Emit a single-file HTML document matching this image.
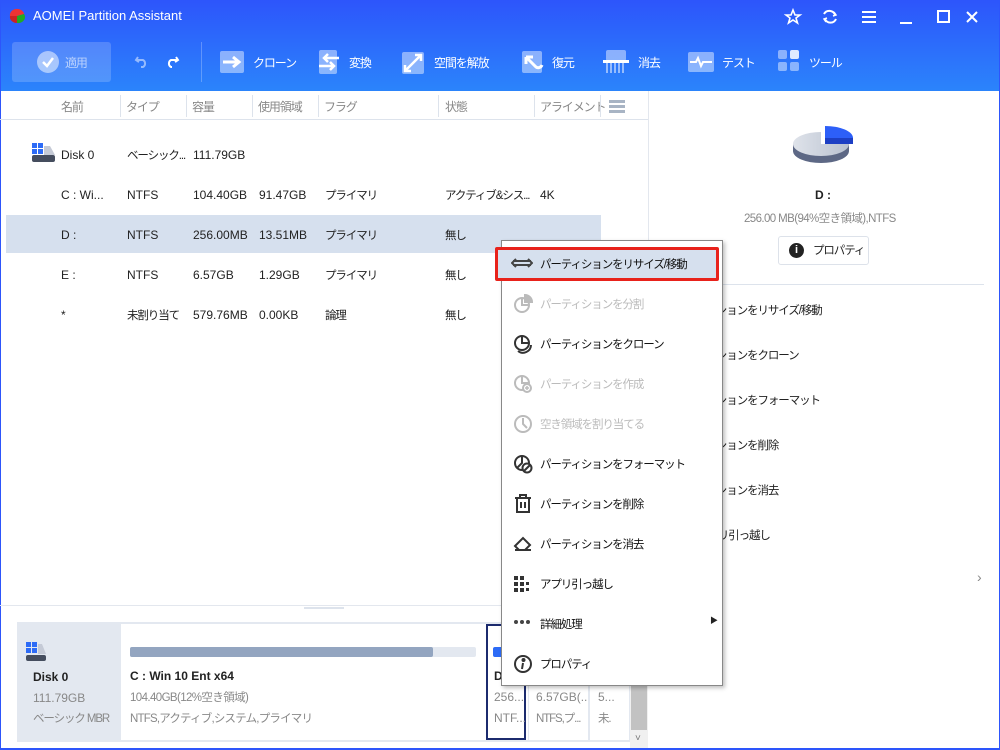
<!DOCTYPE html>
<html><head><meta charset="utf-8"><style>
*{margin:0;padding:0;box-sizing:border-box}
body{width:1000px;height:750px;overflow:hidden;position:relative;background:#fff;font-family:"Liberation Sans","Noto Sans CJK JP",sans-serif;font-size:12px;color:#222}
.a{position:absolute;white-space:nowrap}
.j{font-size:11.5px;letter-spacing:-1.1px}
#hdr{position:absolute;left:0;top:0;width:1000px;height:91px;background:linear-gradient(#2d55fb,#2b84fb)}
.tb{color:#fff;font-size:12px}
.ic{position:absolute;background:rgba(255,255,255,.45);border-radius:2px}
.hd{color:#888;font-size:12px}
.sep{position:absolute;top:95px;width:1px;height:22px;background:#dde3ec}
.menu{position:absolute;left:501px;top:240px;width:222px;height:446px;background:#fff;border:1px solid #888;box-shadow:2px 2px 4px rgba(0,0,0,.25)}
.mi{position:absolute;left:38px;font-size:11.5px;letter-spacing:-1.1px;color:#111}
.dis{color:#bbb}
.rp{position:absolute;left:675px;font-size:11.5px;letter-spacing:-1.1px;color:#222}
</style></head><body>
<div id="hdr"></div>
<div class="a" style="left:0;top:0;width:1px;height:750px;background:#2d55fb"></div>
<div class="a" style="left:999px;top:0;width:1px;height:750px;background:#2d55fb"></div>
<div class="a" style="left:0;top:748px;width:1000px;height:2px;background:#2d55fb"></div>
<svg class="a" style="left:8px;top:8px" width="18" height="16"><path d="M2 8 A7 6 0 0 1 16 6 L9 8Z" fill="#e33"/><path d="M2 8 L9 8 L9 15 A7 6 0 0 1 2 8Z" fill="#c22"/><path d="M9 8 L16 6 A7 6 0 0 1 9 15Z" fill="#2a2"/></svg>
<div class="a tb" style="left:33px;top:8px;font-size:13px">AOMEI Partition Assistant</div>
<svg class="a" style="left:784px;top:8px" width="200" height="18" fill="none" stroke="#fff" stroke-width="2">
<path d="M9 2 L11 7 L16 7 L12 10 L13.5 15 L9 12 L4.5 15 L6 10 L2 7 L7 7Z" stroke-width="1.6"/>
<path d="M40 6 A6 6 0 0 1 51 7 M52 11 A6 6 0 0 1 41 11" /><path d="M50 4 L52 7 L49 8 M42 14 L40 11 L43 10" stroke-width="1.5"/>
<path d="M78 4 H92 M78 9 H92 M78 14 H92"/>
<path d="M116 15 H128"/>
<rect x="154" y="3" width="11" height="11"/>
<path d="M190 3 L200 13 M200 3 L190 13" transform="translate(-7,1)"/>
</svg>
<div class="a" style="left:12px;top:42px;width:99px;height:40px;background:rgba(255,255,255,.18);border-radius:3px"></div>
<div class="a" style="left:37px;top:51px;width:22px;height:22px;border-radius:50%;background:rgba(255,255,255,.5)"></div>
<svg class="a" style="left:37px;top:51px" width="22" height="22"><path d="M6 11 L10 15 L16 7" stroke="#fff" stroke-width="2.5" fill="none"/></svg>
<div class="a tb j" style="left:65px;top:54px;opacity:.6">適用</div>
<svg class="a" style="left:134px;top:52px" width="46" height="18" fill="none" stroke-width="2"><path d="M4 5 L2 8 L5 10 M2 8 H9 A4 4 0 0 1 9 15 H7" stroke="rgba(255,255,255,.5)"/><path d="M42 5 L44 8 L41 10 M44 8 H37 A4 4 0 0 0 37 15 H38" stroke="#fff"/></svg>
<div class="a" style="left:201px;top:42px;width:1px;height:40px;background:rgba(255,255,255,.25)"></div>
<div class="ic" style="left:220px;top:51px;width:24px;height:22px"></div>
<svg class="a" style="left:220px;top:51px" width="24" height="22"><path d="M3 11 H17 M13 6 L19 11 L13 16" stroke="#fff" stroke-width="3" fill="none"/></svg>
<div class="a tb j" style="left:253px;top:54px">クローン</div>
<div class="ic" style="left:319px;top:50px;width:18px;height:24px"></div>
<svg class="a" style="left:317px;top:50px" width="24" height="24"><path d="M22 8 H8 M11 4 L7 8 L11 12 M2 16 H16 M13 12 L17 16 L13 20" stroke="#fff" stroke-width="2.5" fill="none"/></svg>
<div class="a tb j" style="left:349px;top:54px">変換</div>
<div class="ic" style="left:402px;top:52px;width:22px;height:22px"></div>
<svg class="a" style="left:402px;top:52px" width="22" height="22"><path d="M3 19 L19 3 M3 13 V19 H9 M13 3 H19 V9" stroke="#fff" stroke-width="2.5" fill="none"/></svg>
<div class="a tb j" style="left:434px;top:54px">空間を解放</div>
<div class="ic" style="left:522px;top:51px;width:20px;height:22px"></div>
<svg class="a" style="left:522px;top:51px" width="24" height="24"><path d="M4 6 L14 16 A4 4 0 0 0 20 14 M4 6 V13 M4 6 H11" stroke="#fff" stroke-width="3" fill="none"/></svg>
<div class="a tb j" style="left:552px;top:54px">復元</div>
<div class="ic" style="left:606px;top:50px;width:20px;height:11px"></div>
<div class="a" style="left:603px;top:60px;width:26px;height:3px;background:#fff"></div>
<div class="a" style="left:606px;top:63px;width:20px;height:10px;background:repeating-linear-gradient(90deg,rgba(255,255,255,.5) 0 2px,transparent 2px 4px)"></div>
<div class="a tb j" style="left:638px;top:54px">消去</div>
<div class="ic" style="left:688px;top:52px;width:26px;height:20px"></div>
<svg class="a" style="left:688px;top:52px" width="26" height="20"><path d="M2 10 H8 L10 6 L13 14 L15 10 H24" stroke="#fff" stroke-width="2" fill="none"/></svg>
<div class="a tb j" style="left:722px;top:54px">テスト</div>
<div class="ic" style="left:778px;top:50px;width:9px;height:9px"></div>
<div class="a" style="left:790px;top:50px;width:9px;height:9px;background:#fff;border-radius:2px;opacity:.85"></div>
<div class="ic" style="left:778px;top:62px;width:9px;height:9px"></div>
<div class="ic" style="left:790px;top:62px;width:9px;height:9px"></div>
<div class="a tb j" style="left:809px;top:54px">ツール</div>
<div class="a hd j" style="left:61px;top:98px">名前</div>
<div class="sep" style="left:120px"></div><div class="a hd j" style="left:126px;top:98px">タイプ</div>
<div class="sep" style="left:186px"></div><div class="a hd j" style="left:192px;top:98px">容量</div>
<div class="sep" style="left:252px"></div><div class="a hd j" style="left:258px;top:98px">使用領域</div>
<div class="sep" style="left:318px"></div><div class="a hd j" style="left:324px;top:98px">フラグ</div>
<div class="sep" style="left:438px"></div><div class="a hd j" style="left:445px;top:98px">状態</div>
<div class="sep" style="left:534px"></div><div class="a hd j" style="left:540px;top:98px">アライメント</div>
<div class="sep" style="left:600px"></div>
<div class="a" style="left:609px;top:100px;width:16px;height:13px;background:repeating-linear-gradient(#a8b4c4 0 3px,transparent 3px 5px)"></div>
<div class="a" style="left:0;top:119px;width:648px;height:1px;background:#dde3ec"></div>
<div class="a" style="left:648px;top:91px;width:1px;height:514px;background:#e3e7ee"></div>
<div class="a" style="left:6px;top:215px;width:595px;height:38px;background:#d6e0ee"></div>
<svg class="a" style="left:31px;top:143px" width="26" height="20"><rect x="1" y="0" width="5" height="5" fill="#2d6bf6"/><rect x="7" y="0" width="5" height="5" fill="#2d6bf6"/><rect x="1" y="6" width="5" height="5" fill="#2d6bf6"/><rect x="7" y="6" width="5" height="5" fill="#2d6bf6"/><path d="M13 3 H19 L24 12 H13Z" fill="#c5cad6"/><rect x="1" y="12" width="23" height="7" rx="2" fill="#454d5e"/></svg>
<div class="a" style="left:61px;top:148px">Disk 0</div><div class="a j" style="left:127px;top:147px">ベーシック...</div><div class="a" style="left:193px;top:148px">111.79GB</div>
<div class="a" style="left:61px;top:188px">C : Wi...</div><div class="a" style="left:127px;top:188px">NTFS</div><div class="a" style="left:193px;top:188px">104.40GB</div><div class="a" style="left:259px;top:188px">91.47GB</div><div class="a j" style="left:325px;top:187px">プライマリ</div><div class="a j" style="left:445px;top:187px">アクティブ&amp;シス...</div><div class="a" style="left:540px;top:188px">4K</div>
<div class="a" style="left:61px;top:228px">D :</div><div class="a" style="left:127px;top:228px">NTFS</div><div class="a" style="left:193px;top:228px">256.00MB</div><div class="a" style="left:259px;top:228px">13.51MB</div><div class="a j" style="left:325px;top:227px">プライマリ</div><div class="a j" style="left:445px;top:227px">無し</div>
<div class="a" style="left:61px;top:268px">E :</div><div class="a" style="left:127px;top:268px">NTFS</div><div class="a" style="left:193px;top:268px">6.57GB</div><div class="a" style="left:259px;top:268px">1.29GB</div><div class="a j" style="left:325px;top:267px">プライマリ</div><div class="a j" style="left:445px;top:267px">無し</div>
<div class="a" style="left:61px;top:308px">*</div><div class="a j" style="left:127px;top:307px">未割り当て</div><div class="a" style="left:193px;top:308px">579.76MB</div><div class="a" style="left:259px;top:308px">0.00KB</div><div class="a j" style="left:325px;top:307px">論理</div><div class="a j" style="left:445px;top:307px">無し</div>
<svg class="a" style="left:790px;top:124px" width="66" height="50"><defs><linearGradient id="g" x1="0" x2="1"><stop offset="0" stop-color="#dfe3ea"/><stop offset="1" stop-color="#b9c1d0"/></linearGradient></defs><path d="M3 20 V27 A28 12 0 0 0 59 27 V20Z" fill="#5d6885"/><path d="M31 8 A28 12 0 1 0 59 20 L31 20Z" fill="url(#g)"/><path d="M35 2 A28 12 0 0 1 63 14 H35Z" fill="#2d5ff8"/><path d="M35 14 H63 V20 H35Z" fill="#1d3fc4"/></svg>
<div class="a" style="left:815px;top:188px;font-weight:bold">D :</div>
<div class="a j" style="left:744px;top:210px;color:#888;letter-spacing:-.6px">256.00 MB(94%空き領域),NTFS</div>
<div class="a" style="left:778px;top:236px;width:91px;height:29px;border:1px solid #dde2ea;border-radius:3px"></div>
<div class="a" style="left:789px;top:243px;width:15px;height:15px;border-radius:50%;background:#222;color:#fff;font-size:11px;font-weight:bold;text-align:center;line-height:15px">i</div>
<div class="a j" style="left:813px;top:242px">プロパティ</div>
<div class="a" style="left:662px;top:284px;width:322px;height:1px;background:#dde3ec"></div>
<div class="rp" style="top:302px">パーティションをリサイズ/移動</div>
<div class="rp" style="top:347px">パーティションをクローン</div>
<div class="rp" style="top:392px">パーティションをフォーマット</div>
<div class="rp" style="top:437px">パーティションを削除</div>
<div class="rp" style="top:482px">パーティションを消去</div>
<div class="rp" style="top:527px;left:697px">アプリ引っ越し</div>
<div class="a" style="left:977px;top:569px;color:#888;font-size:14px">›</div>
<div class="a" style="left:0;top:605px;width:648px;height:1px;background:#e3e7ee"></div>
<div class="a" style="left:304px;top:607px;width:40px;height:2px;background:#dde3ec"></div>
<div class="a" style="left:17px;top:622px;width:613px;height:120px;background:#e3e8f0"></div>
<div class="a" style="left:121px;top:624px;width:508px;height:116px;background:#fff"></div>
<svg class="a" style="left:26px;top:642px" width="20" height="20"><rect x="0" y="0" width="5" height="5" fill="#2d6bf6"/><rect x="6" y="0" width="5" height="5" fill="#2d6bf6"/><rect x="0" y="6" width="5" height="5" fill="#2d6bf6"/><rect x="6" y="6" width="5" height="5" fill="#2d6bf6"/><path d="M12 2 H16 L20 12 H12Z" fill="#c5cad6"/><rect x="0" y="13" width="20" height="6" rx="2" fill="#454d5e"/></svg>
<div class="a" style="left:33px;top:670px;font-weight:bold">Disk 0</div>
<div class="a" style="left:33px;top:691px;color:#888">111.79GB</div>
<div class="a j" style="left:33px;top:710px;color:#888">ベーシック MBR</div>
<div class="a" style="left:130px;top:647px;width:346px;height:10px;background:#e3e8f0;border-radius:2px"></div>
<div class="a" style="left:130px;top:647px;width:303px;height:10px;background:#93a5c0;border-radius:2px"></div>
<div class="a" style="left:130px;top:669px;font-weight:bold">C : Win 10 Ent x64</div>
<div class="a j" style="left:130px;top:689px;color:#888;letter-spacing:-.6px">104.40GB(12%空き領域)</div>
<div class="a j" style="left:130px;top:710px;color:#888;letter-spacing:-.8px">NTFS,アクティブ,システム,プライマリ</div>
<div class="a" style="left:486px;top:624px;width:40px;height:116px;border:2px solid #1c2b6e"></div>
<div class="a" style="left:493px;top:647px;width:10px;height:10px;background:#2d6bf6;border-radius:2px"></div>
<div class="a" style="left:494px;top:669px;font-weight:bold">D</div>
<div class="a" style="left:494px;top:690px;color:#888">256...</div>
<div class="a" style="left:494px;top:711px;color:#888">NTF...</div>
<div class="a" style="left:528px;top:624px;width:1px;height:116px;background:#e3e8f0"></div>
<div class="a" style="left:536px;top:690px;color:#888">6.57GB(...</div>
<div class="a j" style="left:536px;top:710px;color:#888">NTFS,プ...</div>
<div class="a" style="left:588px;top:624px;width:2px;height:116px;background:#e3e8f0"></div>
<div class="a" style="left:598px;top:690px;color:#888">5...</div>
<div class="a j" style="left:598px;top:710px;color:#888">未.</div>
<div class="a" style="left:630px;top:606px;width:18px;height:142px;background:#f0f0f0"></div>
<div class="a" style="left:631px;top:620px;width:16px;height:110px;background:#c2c2c2"></div>
<div class="a" style="left:635px;top:733px;color:#777;font-size:10px">˅</div>
<div class="menu">
<div class="a" style="left:-7px;top:6px;width:224px;height:34px;background:#d6e0ee;border:3px solid #e8221b;border-radius:2px"></div>
<svg class="a" style="left:9px;top:14px" width="22" height="16" fill="none" stroke="#444" stroke-width="2"><path d="M5 4 L1 8 L5 12 M17 4 L21 8 L17 12 M2 6 H20 M2 10 H20"/></svg>
<div class="mi" style="top:15px">パーティションをリサイズ/移動</div>
<svg class="a" style="left:11px;top:53px" width="20" height="20" fill="none" stroke="#bbb" stroke-width="2"><circle cx="9" cy="11" r="7"/><path d="M9 4 V11 H16"/><path d="M12 1 A7 7 0 0 1 19 8 H12Z" fill="#bbb"/></svg>
<div class="mi dis" style="top:55px">パーティションを分割</div>
<svg class="a" style="left:11px;top:93px" width="20" height="20" fill="none" stroke="#333" stroke-width="2"><circle cx="9" cy="9" r="7"/><path d="M9 2 V9 H16 M5 17 A8 8 0 0 0 18 11"/></svg>
<div class="mi" style="top:95px">パーティションをクローン</div>
<svg class="a" style="left:11px;top:133px" width="20" height="20" fill="none" stroke="#bbb" stroke-width="2"><circle cx="9" cy="9" r="7"/><path d="M9 2 V9 H16"/><circle cx="14" cy="14" r="4" fill="#fff"/><path d="M14 12 V16 M12 14 H16" stroke-width="1.5"/></svg>
<div class="mi dis" style="top:135px">パーティションを作成</div>
<svg class="a" style="left:11px;top:173px" width="20" height="20" fill="none" stroke="#bbb" stroke-width="2"><circle cx="10" cy="10" r="8"/><path d="M10 4 V10 L14 14"/></svg>
<div class="mi dis" style="top:175px">空き領域を割り当てる</div>
<svg class="a" style="left:11px;top:213px" width="20" height="20" fill="none" stroke="#333" stroke-width="2"><circle cx="9" cy="9" r="7"/><path d="M9 2 V9 L4 14"/><circle cx="14" cy="14" r="4.5" fill="#fff"/><path d="M11 17 L17 11"/></svg>
<div class="mi" style="top:215px">パーティションをフォーマット</div>
<svg class="a" style="left:12px;top:253px" width="18" height="20" fill="none" stroke="#333" stroke-width="2"><path d="M1 4 H17 M6 4 V1 H12 V4 M3 4 V18 H15 V4 M7 8 V14 M11 8 V14"/></svg>
<div class="mi" style="top:255px">パーティションを削除</div>
<svg class="a" style="left:11px;top:293px" width="20" height="20" fill="none" stroke="#333" stroke-width="2"><path d="M2 12 L10 4 L17 11 L12 16 H6Z M2 16 H18"/></svg>
<div class="mi" style="top:295px">パーティションを消去</div>
<svg class="a" style="left:12px;top:335px" width="16" height="16" fill="#333"><rect x="0" y="0" width="4" height="4"/><rect x="6" y="0" width="4" height="4"/><rect x="0" y="6" width="4" height="4"/><rect x="6" y="6" width="4" height="4"/><rect x="12" y="6" width="3" height="3"/><rect x="0" y="12" width="4" height="4"/><rect x="6" y="12" width="4" height="4"/><rect x="12" y="12" width="3" height="3"/></svg>
<div class="mi" style="top:335px">アプリ引っ越し</div>
<svg class="a" style="left:11px;top:378px" width="20" height="6" fill="#444"><circle cx="3" cy="3" r="2"/><circle cx="9" cy="3" r="2"/><circle cx="15" cy="3" r="2"/></svg>
<div class="mi" style="top:375px">詳細処理</div>
<div class="a" style="left:208px;top:374px;font-size:8px">▶</div>
<svg class="a" style="left:11px;top:413px" width="20" height="20" fill="none" stroke="#333" stroke-width="2"><circle cx="10" cy="10" r="8"/><path d="M10 9 L9 15" stroke-width="2"/><circle cx="10.5" cy="6" r="1" fill="#333"/></svg>
<div class="mi" style="top:415px">プロパティ</div>
</div>
</body></html>
